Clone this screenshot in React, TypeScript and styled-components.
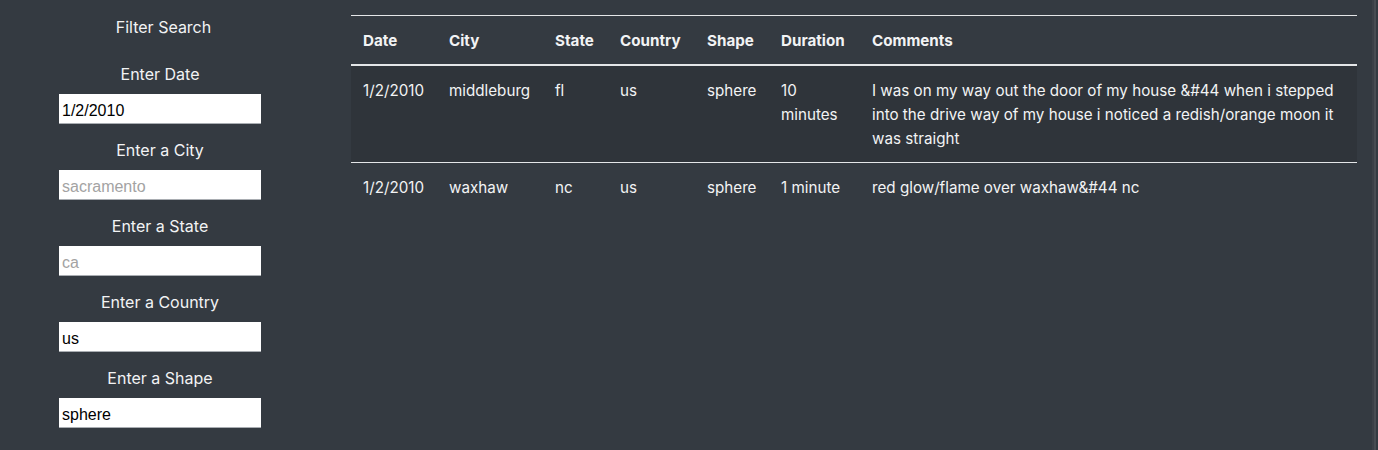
import React from 'react';
import styled, { createGlobalStyle } from 'styled-components';

// --- Styled Components ---

const GlobalStyle = createGlobalStyle`
  html, body {
    margin: 0;
    padding: 0;
    background: #343a41;
  }
  body {
    font-family: Inter, "Liberation Sans", sans-serif;
    color: #f2f3f4;
    font-size: 16px;
  }
`;

const Page = styled.div`
  display: flex;
  min-height: 450px;
  background: #343a41;
`;

const Sidebar = styled.aside`
  width: 320px;
  flex-shrink: 0;
  display: flex;
  flex-direction: column;
  align-items: center;
  padding-top: 16px;
`;

const SidebarTitle = styled.div`
  font-size: 16px;
  line-height: 22px;
  margin-left: 7px;
  margin-bottom: 25px;
`;

const Field = styled.div`
  display: flex;
  flex-direction: column;
  align-items: center;
  margin-bottom: 15px;
`;

const FieldLabel = styled.label`
  font-size: 16px;
  line-height: 22px;
  margin-bottom: 9px;
`;

const FieldInput = styled.input`
  box-sizing: border-box;
  width: 202px;
  height: 30px;
  padding: 4px 3px 0;
  border: none;
  border-bottom: 1px solid #a9adb2;
  background: #fff;
  color: #000;
  font-family: "Liberation Sans", Arial, sans-serif;
  font-size: 16px;
  outline: none;

  &::placeholder {
    color: #a3a3a3;
  }
`;

const Main = styled.main`
  flex: 1;
  padding: 15px 15px 0 31px;
`;

const Table = styled.table`
  width: 100%;
  border-collapse: collapse;
  border-top: 1px solid #e4e6e8;
  font-size: 15.2px;
  line-height: 24px;
`;

const HeadCell = styled.th<{ w?: number }>`
  width: ${p => (p.w ? `${p.w}px` : 'auto')};
  box-sizing: border-box;
  padding: 13px 12px 11px;
  text-align: left;
  font-weight: 700;
  vertical-align: bottom;
  border-bottom: 2px solid #e4e6e8;
`;

const Row = styled.tr<{ striped?: boolean }>`
  background: ${p => (p.striped ? '#2f343a' : 'transparent')};
  border-bottom: 1px solid #e4e6e8;

  &:last-child {
    border-bottom: none;
  }
`;

const Cell = styled.td`
  padding: 13px 12px 11px;
  vertical-align: top;
`;

const ScrollTrack = styled.div`
  width: 2px;
  flex-shrink: 0;
  margin-right: 2px;
  background: #484c52;
  border-left: 2px solid #3c4047;
`;

// --- Data ---

const filters = [
  { label: 'Enter Date', value: '1/2/2010', placeholder: '' },
  { label: 'Enter a City', value: '', placeholder: 'sacramento' },
  { label: 'Enter a State', value: '', placeholder: 'ca' },
  { label: 'Enter a Country', value: 'us', placeholder: '' },
  { label: 'Enter a Shape', value: 'sphere', placeholder: '' },
];

const columns = [
  { title: 'Date', w: 86 },
  { title: 'City', w: 106 },
  { title: 'State', w: 65 },
  { title: 'Country', w: 87 },
  { title: 'Shape', w: 74 },
  { title: 'Duration', w: 91 },
  { title: 'Comments' },
];

const sightings = [
  {
    date: '1/2/2010',
    city: 'middleburg',
    state: 'fl',
    country: 'us',
    shape: 'sphere',
    duration: '10 minutes',
    comments:
      'I was on my way out the door of my house &#44 when i stepped into the drive way of my house i noticed a redish/orange moon it was straight',
  },
  {
    date: '1/2/2010',
    city: 'waxhaw',
    state: 'nc',
    country: 'us',
    shape: 'sphere',
    duration: '1 minute',
    comments: 'red glow/flame over waxhaw&#44 nc',
  },
];

// --- Main Component ---

const App: React.FC = () => {
  return (
    <>
      <GlobalStyle />
      <Page>
        <Sidebar>
          <SidebarTitle>Filter Search</SidebarTitle>
          {filters.map(f => (
            <Field key={f.label}>
              <FieldLabel>{f.label}</FieldLabel>
              <FieldInput defaultValue={f.value} placeholder={f.placeholder} />
            </Field>
          ))}
        </Sidebar>

        <Main>
          <Table>
            <thead>
              <tr>
                {columns.map(c => (
                  <HeadCell key={c.title} w={c.w}>{c.title}</HeadCell>
                ))}
              </tr>
            </thead>
            <tbody>
              {sightings.map((s, idx) => (
                <Row key={idx} striped={idx % 2 === 0}>
                  <Cell>{s.date}</Cell>
                  <Cell>{s.city}</Cell>
                  <Cell>{s.state}</Cell>
                  <Cell>{s.country}</Cell>
                  <Cell>{s.shape}</Cell>
                  <Cell>{s.duration}</Cell>
                  <Cell>{s.comments}</Cell>
                </Row>
              ))}
            </tbody>
          </Table>
        </Main>

        <ScrollTrack />
      </Page>
    </>
  );
};

export default App;
